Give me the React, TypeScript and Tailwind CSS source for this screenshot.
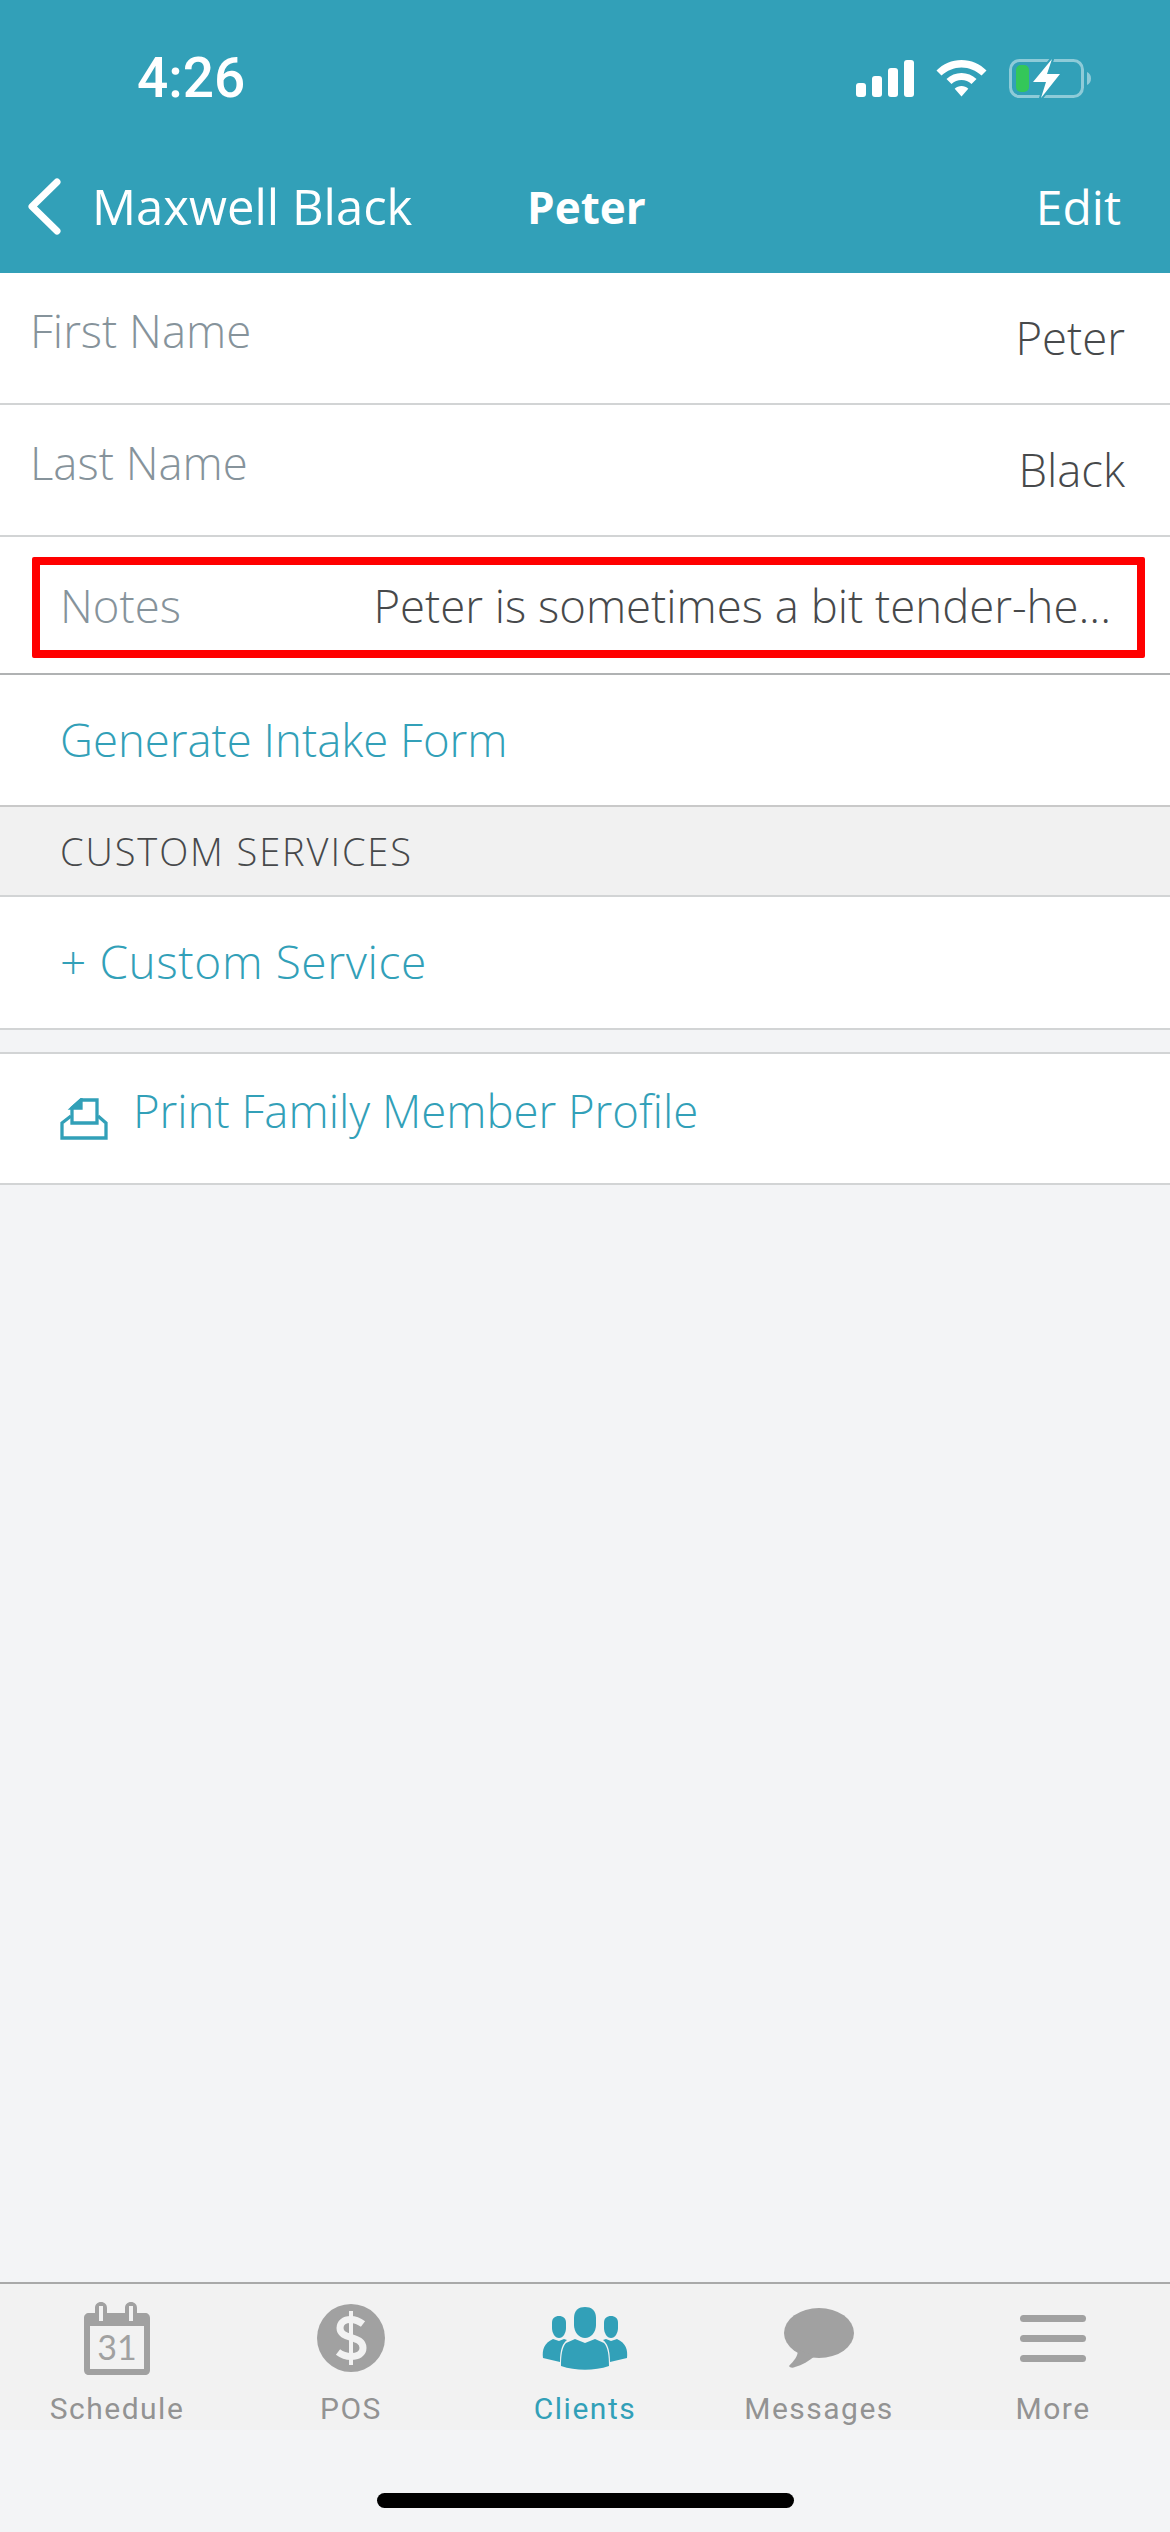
import React from 'react';

const font = { fontFamily: '"Open Sans", sans-serif' };

const StatusIcons = () => (
  <div className="flex items-center">
    <svg width="58" height="37" viewBox="0 0 58 37" fill="#fff">
      <rect x="0" y="23" width="10" height="14" rx="3" />
      <rect x="16" y="16" width="10" height="21" rx="3" />
      <rect x="32" y="8" width="10" height="29" rx="3" />
      <rect x="48" y="0" width="10" height="37" rx="3" />
    </svg>
    <svg className="ml-[22px]" width="51" height="37" viewBox="0 0 51 37" fill="#fff">
      <path d="M25.5 0C35 0 44 4 50.5 10.5L45.5 15.5C40 10.500 33 7.500 25.500 7.500C18 7.500 11 10.500 5.500 15.500L0.500 10.500C7 4 16 0 25.500 0Z" />
      <path d="M25.500 13C31 13 36.500 15.200 40.500 19L35.500 24C32.800 21.500 29.200 20 25.500 20C21.800 20 18.200 21.500 15.500 24L10.500 19C14.500 15.200 20 13 25.500 13Z" />
      <path d="M25.500 26C28 26 30.500 27 32.300 28.700L25.500 36.500L18.700 28.700C20.500 27 23 26 25.500 26Z" />
    </svg>
    <svg className="ml-[22px]" width="82" height="41" viewBox="0 0 82 41">
      <rect x="1.500" y="2.500" width="72" height="36" rx="9" fill="none" stroke="#fff" strokeOpacity="0.45" strokeWidth="3" />
      <path d="M78 14C80.500 15 82 17.500 82 20.500C82 23.500 80.500 26 78 27Z" fill="#fff" fillOpacity="0.45" />
      <rect x="7" y="7" width="13" height="27" rx="5" fill="#34c759" />
      <path d="M43 1L24 24H37L32 40L51 16H38Z" fill="#fff" stroke="#32a0b8" strokeWidth="4" paintOrder="stroke" strokeLinejoin="round" />
    </svg>
  </div>
);

const Row = ({ label, value }: { label: string; value: string }) => (
  <div className="flex h-[132px] justify-between border-b-2 border-[#d2d4d5] bg-white pl-[30px] pr-[45px] font-light">
    <span className="mt-[29px] text-[45.5px] leading-[56px] text-[#86939b]">{label}</span>
    <span className="mt-[36px] text-[45.5px] leading-[56px] text-[#47494b]">{value}</span>
  </div>
);

const tabs = [
  {
    label: 'Schedule',
    icon: (
      <svg width="66" height="73" viewBox="0 0 66 73">
        <path fillRule="evenodd" fill="#a1a1a1" d="M5 11H11V6C11 2.500 13.500 0 17 0C20.500 0 23 2.500 23 6V11H41V6C41 2.500 43.500 0 47 0C50.500 0 53 2.500 53 6V11H61C64 11 66 13 66 16V68C66 71 64 73 61 73H5C2 73 0 71 0 68V16C0 13 2 11 5 11ZM6 24V67H60V24ZM15 4V19H19V4ZM45 4V19H49V4Z" />
      </svg>
    ),
    text: '31',
  },
  {
    label: 'POS',
    icon: (
      <svg width="68" height="68" viewBox="0 0 68 68">
        <circle cx="34" cy="34" r="34" fill="#a1a1a1" />
        <path d="M34 7V61" stroke="#f2f2f2" strokeWidth="4" />
        <path d="M46 20C42 17 38 15.500 33.500 15.500C27 15.500 23 19 23 24C23 36 46 31 46 44C46 49.500 41 52.500 34 52.500C29 52.500 25 51 21 48" fill="none" stroke="#f2f2f2" strokeWidth="7" />
      </svg>
    ),
  },
  {
    label: 'Clients',
    active: true,
    icon: (
      <svg width="86" height="63" viewBox="0 0 86 63" fill="#32a0b8">
        <path d="M17 9C21 9 24 11 24 16V21C24 26 21 31 17 31C13 31 10 26 10 21V16C10 11 13 9 17 9Z" />
        <path d="M11 32L17 34L22 32L25 33C21 36 18 42 18 55L1 51C0 43 2 36 11 32Z" />
        <path d="M69 9C65 9 62 11 62 16V21C62 26 65 31 69 31C73 31 76 26 76 21V16C76 11 73 9 69 9Z" />
        <path d="M75 32L69 34L64 32L61 33C65 36 68 42 68 55L85 51C86 43 84 36 75 32Z" />
        <path d="M43 0C49 0 54 3 54 11V18C54 25 49 31 43 31C37 31 32 25 32 18V11C32 3 37 0 43 0Z" />
        <path d="M33 32L43 36L53 32L62 36C66 40 67 49 67 59C52 64 34 64 19 59C19 49 20 40 24 36Z" />
      </svg>
    ),
  },
  {
    label: 'Messages',
    icon: (
      <svg width="70" height="60" viewBox="0 0 70 60" fill="#a1a1a1">
        <ellipse cx="35" cy="25" rx="35" ry="25" />
        <path d="M14 42C14 48 10 53 5 58C6 60 9 60 11 59C18 57 25 53 31 48Z" />
      </svg>
    ),
  },
  {
    label: 'More',
    icon: (
      <div className="flex h-[47px] w-[66px] flex-col justify-between">
        <div className="h-[7px] rounded-full bg-[#a1a1a1]" />
        <div className="h-[7px] rounded-full bg-[#a1a1a1]" />
        <div className="h-[7px] rounded-full bg-[#a1a1a1]" />
      </div>
    ),
  },
];

export default function App() {
  return (
    <div className="flex h-[2532px] w-[1170px] flex-col overflow-hidden bg-[#f3f4f6]" style={font}>
      <div className="h-[273px] shrink-0 bg-[#32a0b8] text-white">
        <div className="flex h-[156px] items-center justify-between pl-[137px] pr-[79px]">
          <span className="text-[55px] font-medium leading-none" style={{ fontFamily: 'Roboto, sans-serif' }}>4:26</span>
          <StatusIcons />
        </div>
        <div className="relative flex h-[117px] items-center justify-between pb-[16px] pl-[28px] pr-[49px]">
          <div className="flex items-center">
            <svg width="33" height="57" viewBox="0 0 33 57" fill="none" stroke="#fff" strokeWidth="7" strokeLinecap="round" strokeLinejoin="round">
              <path d="M29 4L4 28.500L29 53" />
            </svg>
            <span className="ml-[31px] text-[49px] leading-none">Maxwell Black</span>
          </div>
          <span className="absolute left-[527px] text-[44px] font-bold leading-none">Peter</span>
          <span className="text-[48px] leading-none">Edit</span>
        </div>
      </div>

      <Row label="First Name" value="Peter" />
      <Row label="Last Name" value="Black" />

      {/* Notes row, boxed in red on the screenshot */}
      <div className="h-[138px] border-b-2 border-[#b0b2b3] bg-white pl-[32px] pr-[25px] pt-[20px] font-light">
        <div className="flex h-[101px] items-center justify-between rounded-[2px] border-[8px] border-[#ff0000] pb-[5px] pl-[20px] pr-[26px]">
          <span className="text-[45.5px] text-[#86939b]">Notes</span>
          <span className="text-[45.5px] text-[#47494b]">Peter is sometimes a bit tender-he...</span>
        </div>
      </div>

      <div className="flex h-[132px] items-center border-b-2 border-[#c9c9c9] bg-white pb-[2px] pl-[60px] text-[45.5px] font-light text-[#32a0b8]">
        Generate Intake Form
      </div>
      <div className="flex h-[90px] items-center border-b-2 border-[#d2d4d5] bg-[#f1f1f1] pl-[60px] text-[38px] font-light tracking-[1.9px] text-[#47494b]">
        CUSTOM SERVICES
      </div>
      <div className="flex h-[133px] items-center border-b-2 border-[#d2d4d5] bg-white pb-[2px] pl-[60px] text-[46px] font-light tracking-[0.6px] text-[#32a0b8]">
        + Custom Service
      </div>
      <div className="mt-[22px] flex h-[133px] items-center border-y-2 border-[#d2d4d5] bg-white pl-[60px] text-[45.5px] font-light text-[#32a0b8]">
        <svg width="48" height="42" viewBox="0 0 48 42" fill="none" stroke="#32a0b8" strokeWidth="3.300">
          <path d="M11 18L2 25V40H46V25L38 18" />
          <path d="M12 25V10L21 2H37V25Z" />
          <path d="M12 10L21 2V10Z" fill="#32a0b8" />
        </svg>
        <span className="mb-[17px] ml-[25px]">Print Family Member Profile</span>
      </div>

      {/* Tab bar */}
      <div className="mt-auto grid h-[148px] grid-cols-5 border-t-2 border-[#a9a9a9] bg-[#f2f2f2]">
        {tabs.map((tab) => (
          <div key={tab.label} className="relative flex flex-col items-center">
            <div className="flex h-[108px] items-center justify-center">
              {tab.icon}
              {tab.text && (
                <span className="absolute top-[46px] text-[34px] leading-none text-[#a1a1a1]" style={{ fontFamily: 'Lato, sans-serif' }}>
                  {tab.text}
                </span>
              )}
            </div>
            <span
              className={`text-[30px] leading-[34px] tracking-[1.5px] ${tab.active ? 'text-[#32a0b8]' : 'text-[#939393]'}`}
              style={{ fontFamily: 'Roboto, sans-serif' }}
            >
              {tab.label}
            </span>
          </div>
        ))}
      </div>
      <div className="flex h-[102px] shrink-0 justify-center pt-[63px]">
        <div className="h-[15px] w-[417px] rounded-full bg-black" />
      </div>
    </div>
  );
}
